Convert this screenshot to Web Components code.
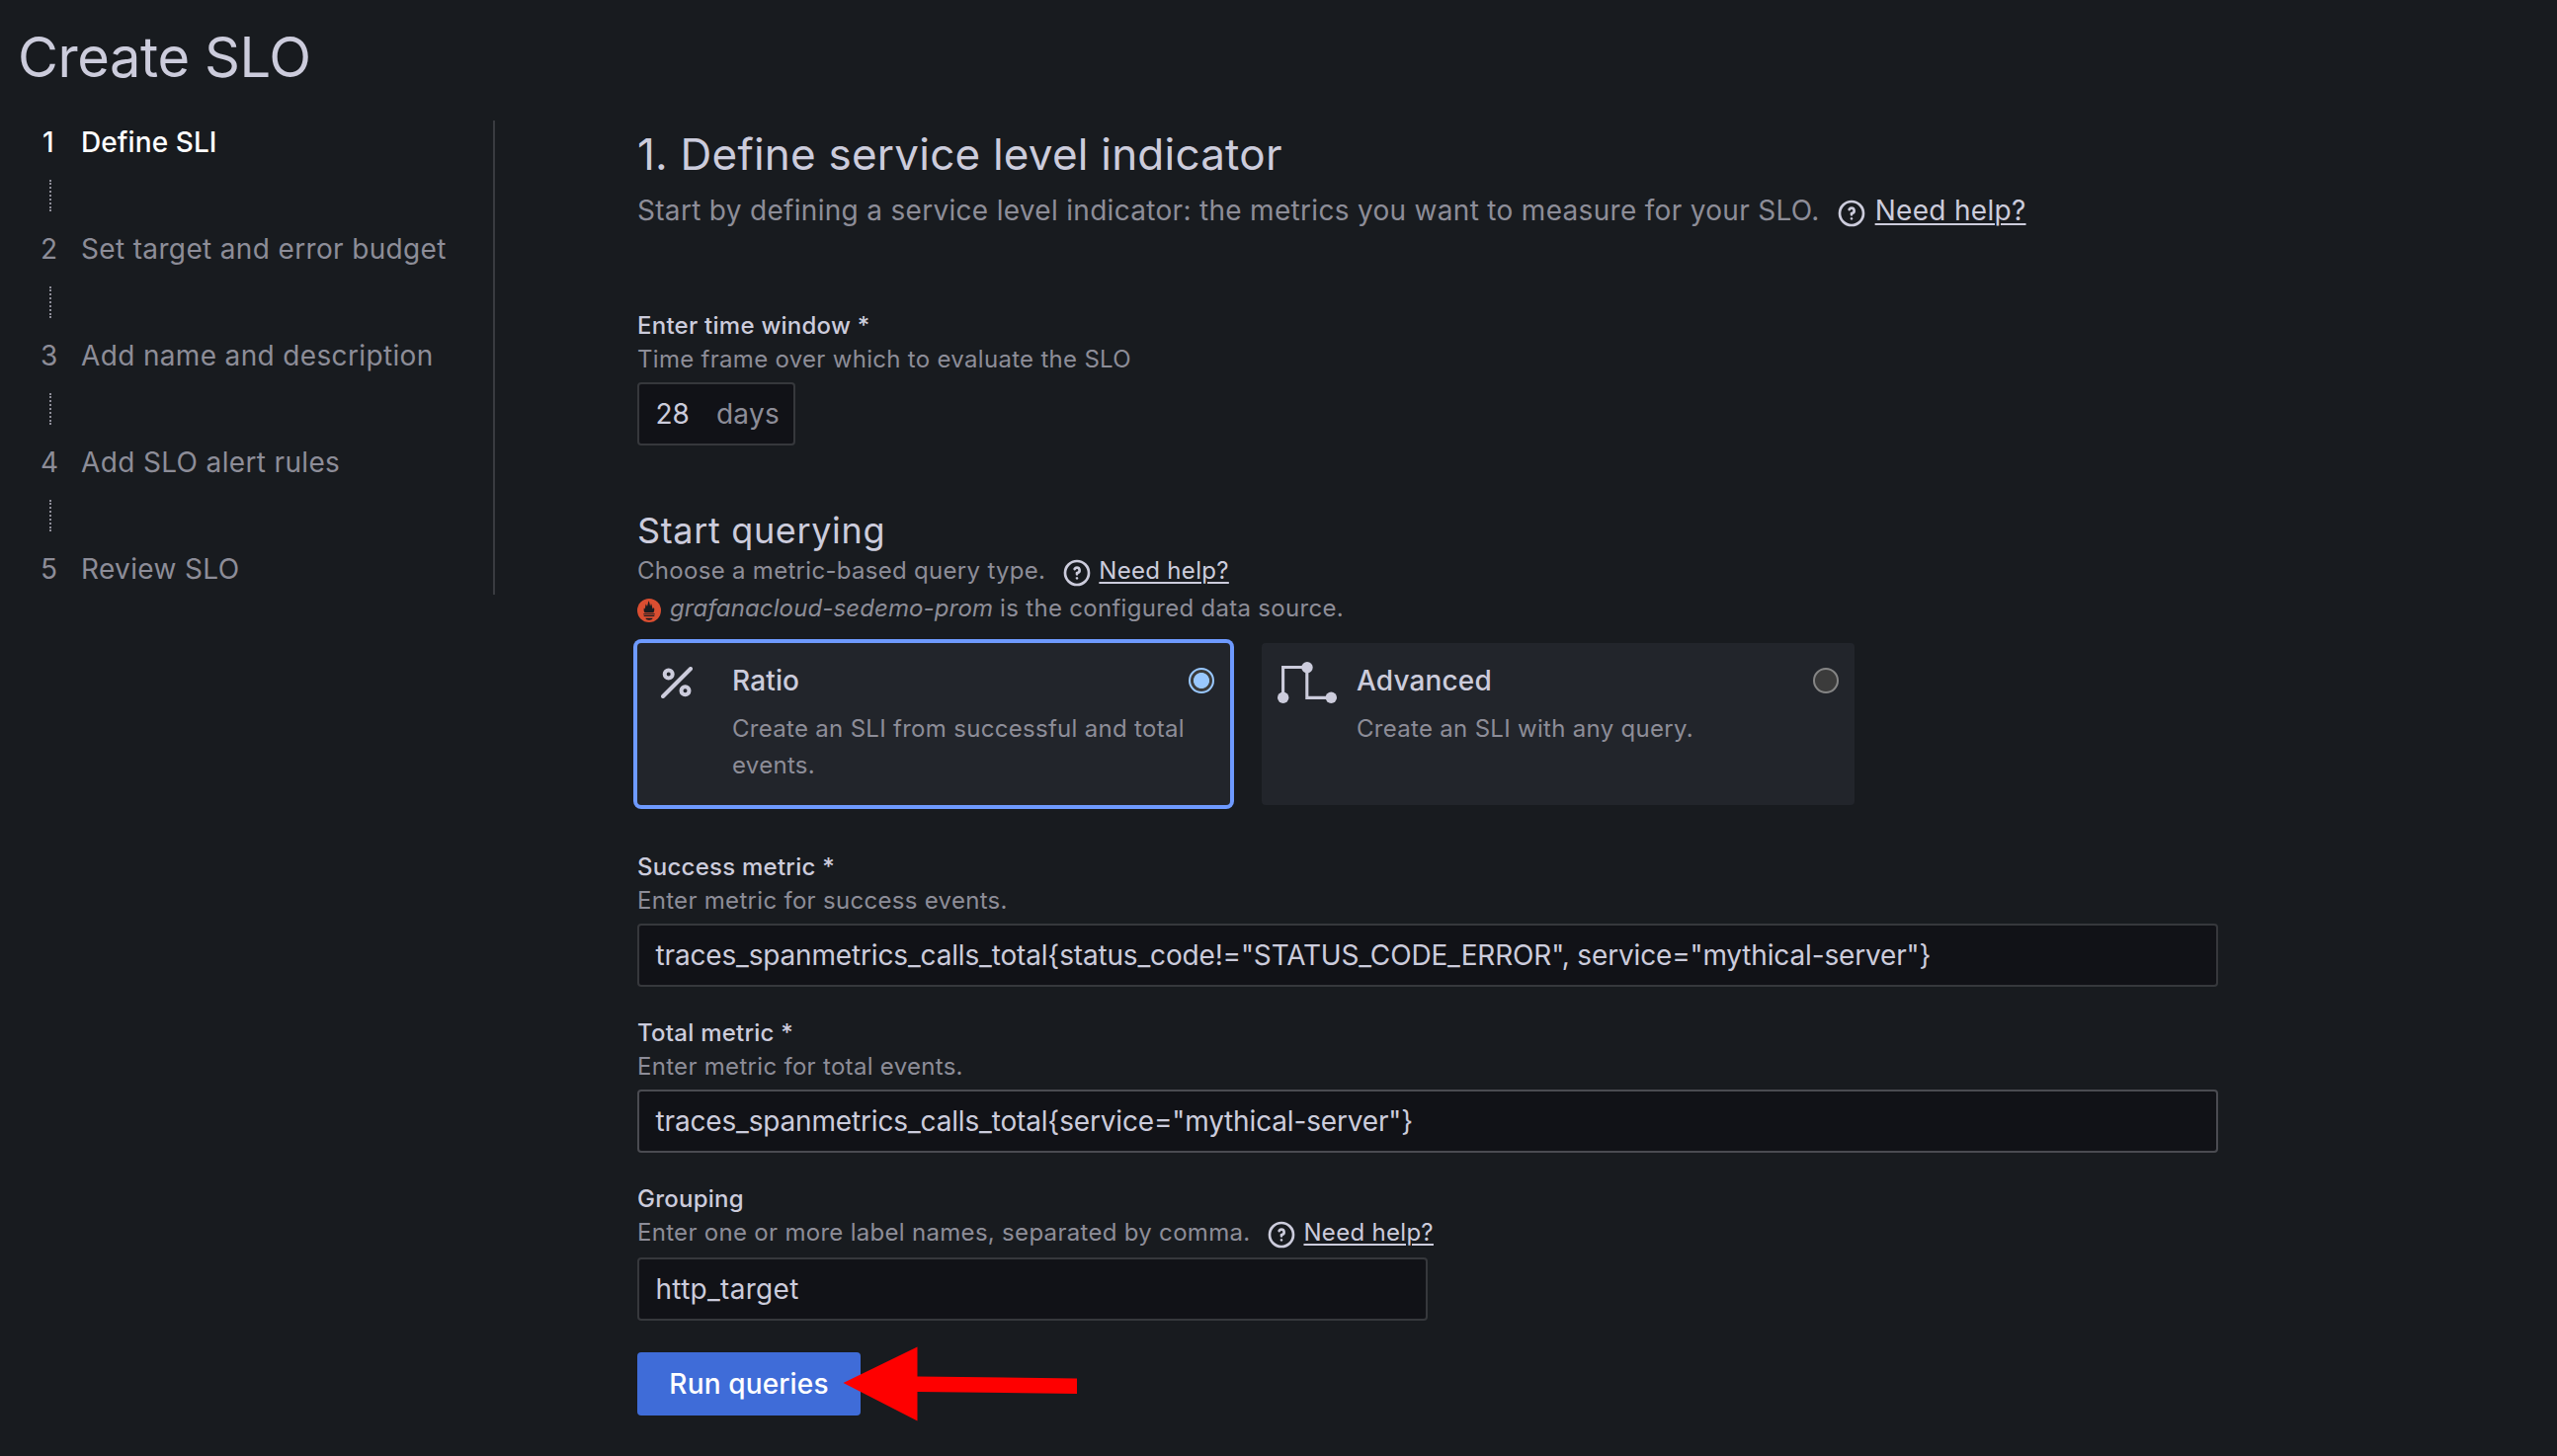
<!DOCTYPE html>
<html lang="en">
<head>
<meta charset="utf-8">
<title>Create SLO</title>
<style>
  html, body { margin: 0; height: 100%; background: #181b1f; }
  body {
    --text: #ccccdc; --muted: #8d8d98; --strong: #ffffff; --surface: #22252b; --medium: 550;
    --field: #111217; --line: #36383c; --primary: #3f6cd8; --focus: #6e9aff;
    color: var(--text); font: 400 28px/44px Inter, "Liberation Sans", sans-serif;
    letter-spacing: 0.3px; overflow: hidden;
  }
</style>
</head>
<body>
<slo-page></slo-page>
<script>
const define = (name, html, setup) => customElements.define(name, class extends HTMLElement {
  constructor() {
    super();
    const root = this.attachShadow({ mode: 'open' });
    const t = document.createElement('template');
    t.innerHTML = html;
    root.append(t.content.cloneNode(true));
  }
  connectedCallback() { if (setup) setup(this, this.shadowRoot); }
});

define('slo-step', `
  <style>
    :host { display: flex; flex-direction: column; color: var(--muted); letter-spacing: 0.35px; }
    :host([active]) { color: var(--strong); font-weight: var(--medium); letter-spacing: 0.08px; }
    .row { display: flex; height: 44px; }
    .num { width: 41px; box-sizing: border-box; letter-spacing: 0; }
    :host([active]) .num { padding-left: 2px; }
    .dots { width: 0; height: 32px; margin: 16px 0 16px 9px; border-left: 2px dotted #8d8d98; }
    :host([last]) .dots { display: none; }
  </style>
  <div class="row"><span class="num"></span><span><slot></slot></span></div>
  <div class="dots"></div>`,
  (el, root) => { root.querySelector('.num').textContent = el.getAttribute('num'); });

define('slo-steps', `
  <style>
    :host { display: block; box-sizing: border-box; width: 501px; height: 480px; padding: 0 0 0 41px; border-right: 2px solid #393b40; }
  </style>
  <slot></slot>`);

define('need-help', `
  <style>
    :host { display: inline-flex; align-items: center; color: var(--text); }
    svg { display: block; margin-right: var(--help-gap, 6px); position: relative; top: var(--help-drop, 2px); }
    a { text-decoration: underline; text-decoration-thickness: 2px; text-underline-offset: 3px; }
  </style>
  <svg width="32" height="32" viewBox="0 0 24 24" fill="currentColor"><path d="M11.29,15.29a1.58,1.58,0,0,0-.12.15.76.76,0,0,0-.09.18.64.64,0,0,0-.06.18,1.36,1.36,0,0,0,0,.2.84.84,0,0,0,.08.38.9.9,0,0,0,.54.54.94.94,0,0,0,.76,0,.9.9,0,0,0,.54-.54A1,1,0,0,0,13,16a1,1,0,0,0-.29-.71A1,1,0,0,0,11.29,15.29ZM12,2A10,10,0,1,0,22,12,10,10,0,0,0,12,2Zm0,18a8,8,0,1,1,8-8A8,8,0,0,1,12,20ZM12,7A3,3,0,0,0,9.4,8.5a1,1,0,1,0,1.73,1A1,1,0,0,1,12,9a1,1,0,0,1,0,2,1,1,0,0,0-1,1v1a1,1,0,0,0,2,0v-.18A3,3,0,0,0,12,7Z"/></svg>
  <a>Need help?</a>`);

define('slo-field', `
  <style>
    :host { display: block; }
    .label { font-weight: var(--medium); font-size: 24px; line-height: 34px; letter-spacing: 0.25px; height: 34px; }
    .desc { display: flex; align-items: center; font-size: 24px; line-height: 34px; height: 34px; color: var(--muted); letter-spacing: 0.3px; white-space: nowrap; }
    .box { box-sizing: border-box; margin-top: var(--box-gap, 6px); height: 64px; display: flex; align-items: center;
      width: var(--w, 1600px); padding: 0 16.5px; border: 2px solid var(--line); border-radius: 4px;
      background: var(--field); letter-spacing: var(--value-spacing, -0.16px); white-space: pre; }
    :host([hovered]) .box { border-color: #4a4b51; }
    ::slotted(need-help) { margin-left: 16px; }
  </style>
  <div class="label"></div>
  <div class="desc"><span class="d"></span><slot name="help"></slot></div>
  <div class="box"><slot></slot></div>`,
  (el, root) => {
    root.querySelector('.label').textContent = el.getAttribute('label');
    root.querySelector('.d').textContent = el.getAttribute('desc');
  });

define('slo-card', `
  <style>
    :host { display: flex; box-sizing: border-box; width: 600px; height: 164px; background: var(--surface);
      border-radius: 4px; padding: 16px 16px 0 16px; }
    :host([checked]) { box-shadow: 0 0 0 4px var(--focus); }
    .icon { width: 80px; flex: none; }
    .main { flex: 1; }
    .title { font-weight: var(--medium); letter-spacing: 0.15px; height: 44px; line-height: 44px; }
    .text { font-size: 24px; line-height: 37px; margin-top: 8px; color: var(--muted); letter-spacing: 0.3px; white-space: nowrap; }
    .radio { flex: none; box-sizing: border-box; width: 26px; height: 26px; margin-top: 9px; border-radius: 50%;
      background: #3b3b3b; border: 2px solid #858585; }
    :host([checked]) .radio { border-color: #99c8ff; background: radial-gradient(circle, #99c8ff 0 7.6px, #3b3b3b 8.4px); }
  </style>
  <div class="icon"><slot name="icon"></slot></div>
  <div class="main"><div class="title"></div><div class="text"><slot></slot></div></div>
  <div class="radio"></div>`,
  (el, root) => { root.querySelector('.title').textContent = el.getAttribute('label'); });

define('prom-icon', `
  <style>:host { display: flex; width: 24px; height: 24px; white-space: normal; } svg { display: block; }</style>
  <svg width="24" height="24" viewBox="0 0 24 24"><circle cx="12" cy="12" r="12" fill="#da4e31"/>
  <path fill="#181b1f" d="M7.6 14.2C6.500 12.800 6.300 11 7 9.200L8 10.800C8.200 8.800 8.100 7.400 8.800 5.600L10 8C10.600 6 10.800 4.400 11.600 2.200 12.600 4 12.500 6 13.200 7.600L14 5C15 7 15 8.800 15.700 10.600L16.900 9C17.500 11 17.400 12.800 16.400 14.200zM6.300 15.200h11.400v1H6.300zM6.700 17h10.600v1H6.700zM8.300 19.800h7.400c-.3 1.200-1.800 2-3.700 2s-3.400-.8-3.700-2z"/></svg>`);

define('run-button', `
  <style>
    :host { display: flex; align-items: center; justify-content: center; width: 226px; height: 64px; border-radius: 4px;
      background: var(--primary); color: #fff; font-weight: var(--medium); letter-spacing: 0.15px; position: relative; }
    svg { position: absolute; left: 208px; top: -7px; }
  </style>
  <span><slot></slot></span>
  <svg width="240" height="78" viewBox="853 1362 240 78"><path fill="#fe0000" d="M853.500 1400 928.500 1363.500V1393.500L1090 1395.500V1411L928.500 1409V1438.500Z"/></svg>`);

define('slo-form', `
  <style>
    :host { display: flex; flex-direction: column; align-items: flex-start; }
    h2 { margin: 0; font-size: 44px; font-weight: 400; line-height: 52px; letter-spacing: 0.22px; white-space: nowrap; }
    h3 { margin: 66px 0 2px; font-size: 36px; font-weight: 400; line-height: 40px; letter-spacing: 0.65px; white-space: nowrap; }
    .sub { display: flex; align-items: center; height: 44px; margin-top: 9px; color: var(--muted); letter-spacing: 0.305px; white-space: nowrap; }
    .sub need-help { margin-left: 16px; --help-gap: 8px; --help-drop: 3px; letter-spacing: 0.3px; }
    .small { display: flex; align-items: center; font-size: 24px; height: 38px; line-height: 38px; color: var(--muted); letter-spacing: 0.3px; white-space: pre; }
    .small need-help { margin-left: 16px; }
    .source prom-icon { margin: 3px 9px 0 0; }
    em { letter-spacing: 0.12px; }
    .cards { display: flex; gap: 32px; margin: 16px 0 46px; }
    .pct { display: block; margin: 8px 0 0 8px; }
    .adv { display: block; margin: 3px 0 0 0; }
    .days { color: var(--muted); margin-left: 27px; letter-spacing: 0.3px; }
    .win { margin-top: 78px; --w: 160px; --value-spacing: 0px; }
    .tot { margin-top: 30px; }
    .grp { margin-top: 30px; --w: 800px; --box-gap: 8px; --value-spacing: 0.3px; }
    run-button { margin-top: 32px; }
  </style>
  <h2>1. Define service level indicator</h2>
  <div class="sub"><span>Start by defining a service level indicator: the metrics you want to measure for your SLO.</span><need-help></need-help></div>
  <slo-field class="win" label="Enter time window *" desc="Time frame over which to evaluate the SLO">28<span class="days">days</span></slo-field>
  <h3>Start querying</h3>
  <div class="small"><span>Choose a metric-based query type.</span><need-help></need-help></div>
  <div class="small source"><prom-icon></prom-icon><span><em>grafanacloud-sedemo-prom</em> is the configured data source.</span></div>
  <div class="cards">
    <slo-card label="Ratio" checked>
      <svg class="pct" slot="icon" width="32" height="32" viewBox="0 0 32 32" fill="none" stroke="#ccccdc" stroke-width="4" stroke-linecap="round"><path d="M2 30 30 2"/><circle cx="7.700" cy="7.400" r="4"/><circle cx="24.500" cy="24.300" r="4"/></svg>
      Create an SLI from successful and total<br>events.
    </slo-card>
    <slo-card label="Advanced">
      <svg class="adv" slot="icon" width="60" height="42" viewBox="0 0 60 42"><path d="M5.600 36V5.500H29.800V36.400H54" fill="none" stroke="#ccccdc" stroke-width="3.100"/><g fill="#ccccdc"><circle cx="5.700" cy="36.300" r="5.700"/><circle cx="30" cy="5.700" r="5.700"/><circle cx="54.300" cy="36.300" r="5.700"/></g></svg>
      Create an SLI with any query.
    </slo-card>
  </div>
  <slo-field label="Success metric *" desc="Enter metric for success events.">traces_spanmetrics_calls_total{status_code!="STATUS_CODE_ERROR", service="mythical-server"}</slo-field>
  <slo-field class="tot" hovered label="Total metric *" desc="Enter metric for total events.">traces_spanmetrics_calls_total{service="mythical-server"}</slo-field>
  <slo-field class="grp" label="Grouping" desc="Enter one or more label names, separated by comma."><need-help slot="help"></need-help>http_target</slo-field>
  <run-button>Run queries</run-button>`);

define('slo-page', `
  <style>
    :host { display: block; }
    h1 { margin: 0; padding: 25px 0 0 18px; height: 97px; font-size: 56px; font-weight: 400; line-height: 66px; letter-spacing: -0.4px; }
    .cols { display: flex; align-items: flex-start; }
    slo-form { margin: 8px 0 0 144px; }
  </style>
  <h1>Create SLO</h1>
  <div class="cols">
    <slo-steps>
      <slo-step num="1" active>Define SLI</slo-step>
      <slo-step num="2">Set target and error budget</slo-step>
      <slo-step num="3">Add name and description</slo-step>
      <slo-step num="4">Add SLO alert rules</slo-step>
      <slo-step num="5" last>Review SLO</slo-step>
    </slo-steps>
    <slo-form></slo-form>
  </div>`);
</script>
</body>
</html>
